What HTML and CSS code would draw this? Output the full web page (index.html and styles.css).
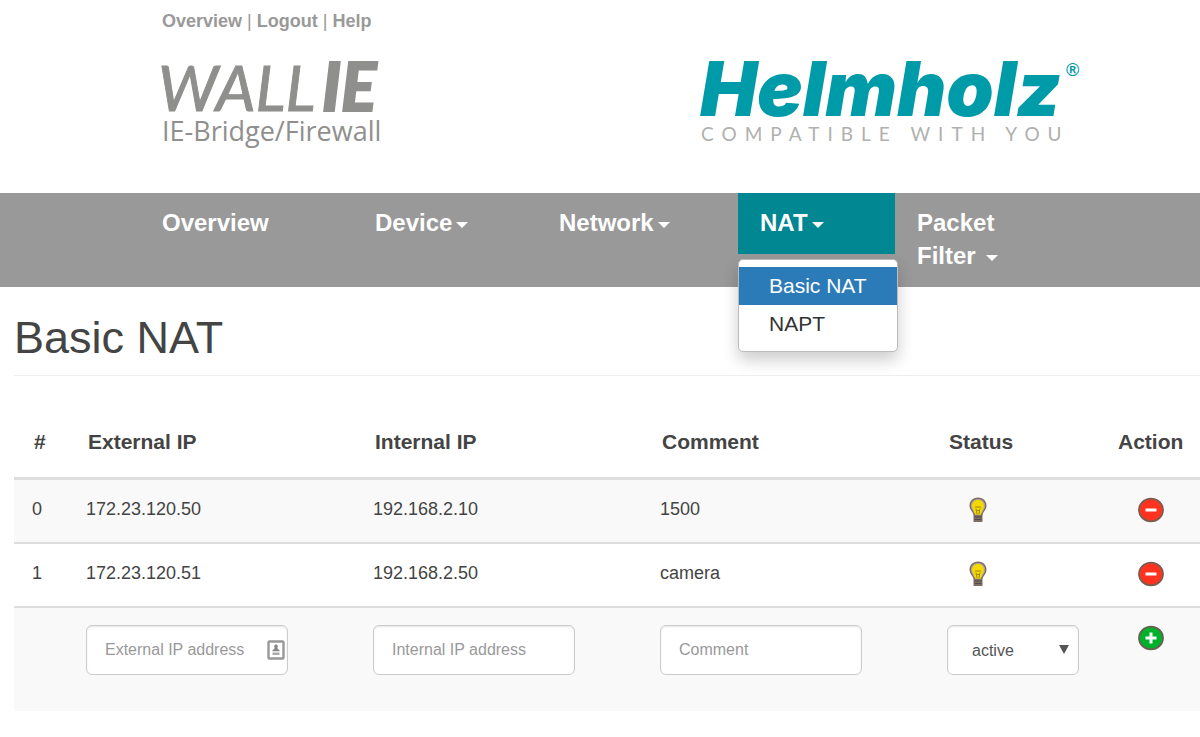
FILE: index.html
```html
<!DOCTYPE html>
<html lang="en">
<head>
<meta charset="UTF-8">
<meta name="viewport" content="width=device-width, initial-scale=1.0">
<title>WALL IE - Basic NAT</title>
<link rel="stylesheet" href="styles.css">
</head>
<body>

<header class="header">
  <div class="top-links">
    <a href="#">Overview</a> | <a href="#">Logout</a> | <a href="#">Help</a>
  </div>
  <div class="logos">
    <svg class="logo-wallie" viewBox="0 0 224 92" role="img" aria-label="WALL IE">
      <text class="wall" x="-4" y="48">WALL</text>
      <text class="ie" x="160" y="48">IE</text>
      <text class="wall-sub" x="0" y="78">IE-Bridge/Firewall</text>
    </svg>
    <svg class="logo-helmholz" viewBox="0 0 384 92" role="img" aria-label="Helmholz">
      <text class="helm" x="-2" y="53">Helmholz</text>
      <text class="helm-r" x="364" y="13">®</text>
      <text class="helm-sub" x="-1" y="78">COMPATIBLE WITH YOU</text>
    </svg>
  </div>
</header>

<nav class="navbar">
  <ul class="nav">
    <li><a href="#">Overview</a></li>
    <li><a href="#">Device<span class="caret"></span></a></li>
    <li><a href="#">Network<span class="caret"></span></a></li>
    <li class="open">
      <a href="#">NAT<span class="caret"></span></a>
      <ul class="dropdown-menu">
        <li class="active"><a href="#">Basic NAT</a></li>
        <li><a href="#">NAPT</a></li>
      </ul>
    </li>
    <li><a href="#">Packet Filter <span class="caret"></span></a></li>
  </ul>
</nav>

<main class="content">
  <h1>Basic NAT</h1>

  <table class="table">
    <thead>
      <tr>
        <th class="col-id">#</th>
        <th class="col-text">External IP</th>
        <th class="col-text">Internal IP</th>
        <th class="col-text">Comment</th>
        <th class="col-status">Status</th>
        <th class="col-action">Action</th>
      </tr>
    </thead>
    <tbody>
      <tr>
        <td>0</td>
        <td>172.23.120.50</td>
        <td>192.168.2.10</td>
        <td>1500</td>
        <td class="status"><button class="icon-btn" type="button" aria-label="Toggle status"><svg class="icon"><use href="#bulb"/></svg></button></td>
        <td class="action"><button class="icon-btn" type="button" aria-label="Delete"><svg class="icon"><use href="#minus"/></svg></button></td>
      </tr>
      <tr>
        <td>1</td>
        <td>172.23.120.51</td>
        <td>192.168.2.50</td>
        <td>camera</td>
        <td class="status"><button class="icon-btn" type="button" aria-label="Toggle status"><svg class="icon"><use href="#bulb"/></svg></button></td>
        <td class="action"><button class="icon-btn" type="button" aria-label="Delete"><svg class="icon"><use href="#minus"/></svg></button></td>
      </tr>
      <tr class="new-row">
        <td></td>
        <td>
          <div class="field">
            <input class="form-control" type="text" placeholder="External IP address" aria-label="External IP address">
            <svg class="autofill" viewBox="0 0 18 20">
              <rect x="1.5" y="1.5" width="15" height="17" rx="1" fill="#fff" stroke="#999" stroke-width="2.4"/>
              <path d="M9 4.500a1.800 1.800 0 0 1 1.400 3l.4 1.500 1.700 1v1.200H5.500V10l1.700-1 .4-1.500A1.800 1.800 0 0 1 9 4.500z" fill="#888"/>
              <rect x="5.5" y="12.500" width="7" height="2.500" fill="#aaa"/>
            </svg>
          </div>
        </td>
        <td><input class="form-control" type="text" placeholder="Internal IP address" aria-label="Internal IP address"></td>
        <td><input class="form-control" type="text" placeholder="Comment" aria-label="Comment"></td>
        <td>
          <div class="select">
            <select class="form-control" aria-label="Status">
              <option>active</option>
              <option>inactive</option>
            </select>
          </div>
        </td>
        <td class="action"><button class="icon-btn" type="button" aria-label="Add"><svg class="icon"><use href="#plus"/></svg></button></td>
      </tr>
    </tbody>
  </table>
</main>

<svg class="sprite">
  <symbol id="bulb" viewBox="0 0 26 26">
    <path d="M13 .5c-5.500 0-8.500 3.700-8.500 8.200 0 3.300 2 5 3.300 7.300.7 1.300.7 2.500.7 4v5h9v-5c0-1.500 0-2.700.7-4 1.300-2.300 3.300-4 3.300-7.300 0-4.500-3-8.200-8.500-8.200z" fill="#7d6f68"/>
    <path d="M13 2c-4.300 0-7 3-7 6.700 0 3 2 4.600 3.100 7.500h7.800c1.200-2.900 3.100-4.500 3.100-7.500C20 5 17.300 2 13 2z" fill="#b3a79c"/>
    <path d="M13 3c-3.800 0-5.900 2.600-5.900 5.800 0 3.200 2.500 4.600 2.900 9h6c.4-4.400 2.900-5.800 2.900-9C18.900 5.600 16.800 3 13 3z" fill="#f5d800"/>
    <path d="M10 10h6M11 11.500l1 5.500M15 11.500l-1 5.500M11.500 13.500h3" stroke="#a58a10" fill="none"/>
    <path d="M9.500 20h7M9.500 22.500h7" stroke="#564a45" stroke-width="1.200"/>
  </symbol>
  <symbol id="minus" viewBox="0 0 26 26">
    <ellipse cx="13" cy="13" rx="12" ry="11.300" fill="#ff3320" stroke="#785d50" stroke-width="1.800"/>
    <rect x="7.500" y="11.500" width="11" height="3" fill="#fff"/>
  </symbol>
  <symbol id="plus" viewBox="0 0 26 26">
    <ellipse cx="13" cy="13" rx="12" ry="11.300" fill="#00b22b" stroke="#6b5d50" stroke-width="1.800"/>
    <path d="M7.500 13h11M13 7.500v11" stroke="#fff" stroke-width="3"/>
  </symbol>
</svg>

</body>
</html>
```
FILE: styles.css
```css
* {
  box-sizing: border-box;
}
body {
  margin: 0;
  font-family: "Liberation Sans", Arial, sans-serif;
  font-size: 18px;
  color: #444;
  background: #fff;
  overflow-x: hidden;
}
a {
  text-decoration: none;
}
.header {
  padding: 10px 120px 38px 162px;
  color: #999;
}
.top-links {
  line-height: 22px;
}
.top-links a {
  color: #999;
  font-weight: bold;
}
.logos {
  display: flex;
  justify-content: space-between;
  margin-top: 31px;
}
.logo-wallie {
  width: 224px;
  height: 92px;
  fill: #8f8f8d;
  overflow: visible;
}
.wall {
  font: italic 63px "Lato", sans-serif;
  stroke: #8f8f8d;
  stroke-width: 1px;
}
.ie {
  font: italic 900 66px "Lato", sans-serif;
  stroke: #8f8f8d;
  stroke-width: 2px;
}
.wall-sub {
  font: 27px "Open Sans", sans-serif;
}
.logo-helmholz {
  width: 384px;
  height: 92px;
  fill: #009ba8;
  margin-right: -6px;
  overflow: visible;
}
.helm {
  font: italic 900 76px "Inter", sans-serif;
}
.helm-r {
  font: bold 18px "Liberation Sans", sans-serif;
}
.helm-sub {
  font: 19px "Lato", sans-serif;
  letter-spacing: 8px;
  fill: #b0b0ae;
}

.navbar {
  background: #999;
  padding: 0 165px 0 140px;
}
.nav {
  display: grid;
  grid-template-columns: 213fr 184fr 201fr 157fr 140fr;
  align-items: start;
  list-style: none;
  margin: 0;
  padding: 0;
}
.nav > li {
  position: relative;
}
.nav > li > a {
  display: block;
  padding: 13px 22px 15px;
  color: #fff;
  font-size: 24px;
  font-weight: bold;
  line-height: 33px;
}
.nav > .open > a {
  background: #008791;
}
.caret {
  display: inline-block;
  margin-left: 4px;
  vertical-align: middle;
  border-top: 6px solid #fff;
  border-left: 6px solid transparent;
  border-right: 6px solid transparent;
}
.dropdown-menu {
  position: absolute;
  top: calc(100% + 5px);
  left: 0;
  z-index: 10;
  width: 160px;
  margin: 0;
  padding: 7px 0 8px;
  list-style: none;
  background: #fff;
  border: 1px solid #bbb;
  border-radius: 5px;
  box-shadow: 0 8px 16px rgba(0,0,0,0.2);
}
.dropdown-menu a {
  display: block;
  padding: 0 30px;
  font-size: 21px;
  line-height: 38px;
  color: #333;
}
.dropdown-menu .active a {
  background: #2c7bb9;
  color: #fff;
}

.content {
  padding-left: 14px;
}
h1 {
  margin: 0 0 30px;
  padding: 25px 0 11px;
  font-size: 45px;
  font-weight: normal;
  line-height: 52px;
  border-bottom: 1px solid #eee;
}
.table {
  width: 100%;
  table-layout: fixed;
  border-collapse: separate;
  border-spacing: 0;
}
.table th {
  padding: 23px 16px 22px 20px;
  font-size: 21px;
  line-height: 26px;
  text-align: left;
  border-bottom: 3px solid #ddd;
}
.table .col-id {
  width: 54px;
}
.table .col-text {
  width: 287px;
}
.table .col-action {
  width: 100px;
  padding-left: 18px;
}
.table td {
  padding: 16px 18px 20px;
  line-height: 26px;
  vertical-align: top;
}
.table tbody tr:nth-child(odd) {
  background: #f9f9f9;
}
.table tbody tr + tr td {
  border-top: 2px solid #ddd;
}
.table td.status {
  padding: 17px 18px 19px 36px;
}
.table td.action {
  padding: 17px 18px 19px 38px;
}
.table .new-row td {
  padding-top: 17px;
  padding-bottom: 36px;
}
.icon-btn {
  width: 26px;
  height: 26px;
  padding: 0;
  border: none;
  background: none;
  cursor: pointer;
  vertical-align: top;
}
.icon {
  display: block;
  width: 26px;
  height: 26px;
}
.field {
  position: relative;
  width: 202px;
}
.form-control {
  display: block;
  width: 202px;
  height: 50px;
  padding: 0 18px;
  font-family: inherit;
  font-size: 16px;
  color: #555;
  background: #fff;
  border: 1px solid #ccc;
  border-radius: 6px;
  box-shadow: inset 0 1px 2px rgba(0,0,0,0.1);
}
.form-control::placeholder {
  color: #999;
}
.autofill {
  position: absolute;
  top: 15px;
  right: 3px;
  width: 18px;
  height: 20px;
}
.select {
  position: relative;
  width: 132px;
}
.select .form-control {
  width: 100%;
  padding: 0 24px;
  appearance: none;
}
.select::after {
  content: "";
  position: absolute;
  top: 20px;
  right: 10px;
  border-top: 9px solid #555;
  border-left: 5px solid transparent;
  border-right: 5px solid transparent;
  pointer-events: none;
}
.sprite {
  position: absolute;
  width: 0;
  height: 0;
}
```
